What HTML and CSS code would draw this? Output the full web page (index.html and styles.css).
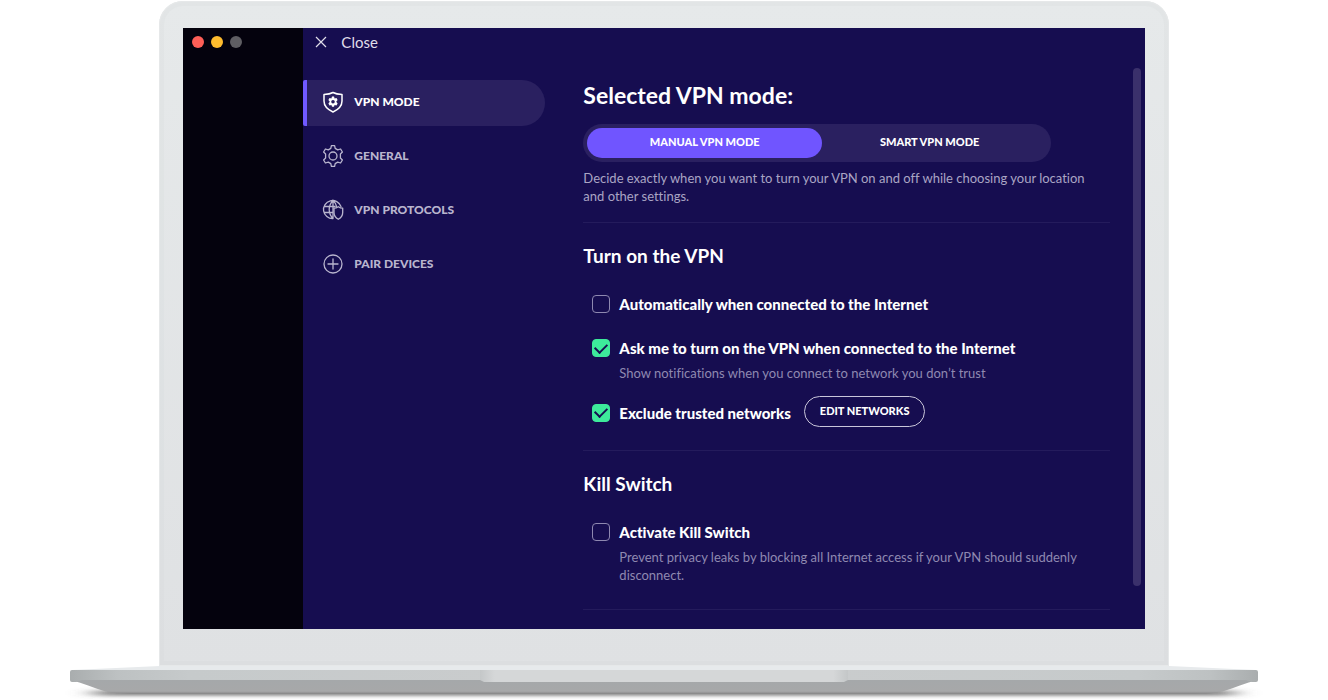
FILE: index.html
```html
<!DOCTYPE html>
<html lang="en">
<head>
<meta charset="utf-8">
<meta name="viewport" content="width=device-width, initial-scale=1">
<title>VPN mode settings</title>
<link rel="stylesheet" href="styles.css">
</head>
<body>
<div class="laptop">
  <div class="lid">
    <div class="screen">
      <aside class="window-edge">
        <span class="dot dot-red"></span>
        <span class="dot dot-yellow"></span>
        <span class="dot dot-gray"></span>
      </aside>
      <div class="sidebar">
        <button class="close" type="button">
          <svg class="close-icon" viewBox="0 0 12 12" aria-hidden="true"><path d="M1 1l10 10M11 1L1 11"/></svg>
          Close
        </button>
        <nav class="nav">
          <a class="nav-item active" href="#mode">
            <svg class="icon" viewBox="0 0 22 22" aria-hidden="true">
              <path stroke-width="1.5" d="M11 1.500C8.500 3 5 3.400 2 3.400V10C2 15 5.500 18.500 11 21C16.500 18.500 20 15 20 10V3.400C17 3.400 13.500 3 11 1.500Z"/>
              <path fill="currentColor" fill-rule="evenodd" stroke="none" d="M10 5.600h2l.6 1.900 1.900-.5 1.100 1.900-1.400 1.800 1.400 1.800-1.100 1.900-1.900-.5-.6 1.900h-2l-.6-1.900-1.900.5-1.100-1.900L7.800 10.700 6.400 8.900l1.100-1.900 1.900.5ZM11 8.900a1.800 1.800 0 1 0 0 3.600 1.800 1.800 0 0 0 0-3.600Z"/>
            </svg>
            <span class="nav-text">VPN MODE</span>
          </a>
          <a class="nav-item" href="#general">
            <svg class="icon" viewBox="0 0 22 22" aria-hidden="true">
              <path d="M9.400.7h3.200l.6 2.700 2.500 1.500 2.900-.9 1.800 3-2 2v4l2 2-1.800 3-2.900-.9-2.500 1.500-.6 2.700H9.400l-.6-2.700-2.500-1.500-2.900.9-1.800-3 2-2V9l-2-2 1.800-3 2.900.9 2.500-1.500Z"/>
              <circle cx="11" cy="11" r="4"/>
            </svg>
            <span class="nav-text">GENERAL</span>
          </a>
          <a class="nav-item" href="#protocols">
            <svg class="icon" viewBox="0 0 22 22" aria-hidden="true">
              <path d="M11 19.500A9 9 0 1 1 19 7.500M2.800 7.500H13M2.300 13.500H11M11 1.500V19.500M11 1.500C8.500 4 7.200 7 7.200 10.500S8.500 17 11 19.500M11 1.500C12.800 3.200 14 5.200 14.500 7.300"/>
              <path d="M16.300 7.700C14.900 8.700 13.400 9.100 12 9.100V13.500C12 17 14 19 16.300 20.300C18.600 19 20.700 17 20.700 13.500V9.100C19.200 9.100 17.700 8.700 16.300 7.700Z"/>
            </svg>
            <span class="nav-text">VPN PROTOCOLS</span>
          </a>
          <a class="nav-item" href="#pair">
            <svg class="icon" viewBox="0 0 22 22" aria-hidden="true"><circle cx="11" cy="11" r="9"/><path d="M11 6v10M6 11h10"/></svg>
            <span class="nav-text">PAIR DEVICES</span>
          </a>
        </nav>
      </div>
      <main class="content">
        <section class="section section-mode" id="mode">
          <h1 class="title">Selected VPN mode:</h1>
          <div class="switch">
            <button class="mode selected" type="button" aria-pressed="true">MANUAL VPN MODE</button>
            <button class="mode" type="button" aria-pressed="false">SMART VPN MODE</button>
          </div>
          <p class="note">Decide exactly when you want to turn your VPN on and off while choosing your location and other settings.</p>
        </section>
        <section class="section">
          <h2 class="subtitle">Turn on the VPN</h2>
          <div class="option">
            <input class="check" type="checkbox" id="auto">
            <label class="option-label" for="auto">Automatically when connected to the Internet</label>
          </div>
          <div class="option">
            <input class="check" type="checkbox" id="ask" checked>
            <label class="option-label" for="ask">Ask me to turn on the VPN when connected to the Internet</label>
          </div>
          <p class="hint">Show notifications when you connect to network you don’t trust</p>
          <div class="option option-tall">
            <input class="check" type="checkbox" id="trusted" checked>
            <label class="option-label" for="trusted">Exclude trusted networks</label>
            <button class="edit" type="button">EDIT NETWORKS</button>
          </div>
        </section>
        <section class="section">
          <h2 class="subtitle">Kill Switch</h2>
          <div class="option">
            <input class="check" type="checkbox" id="kill">
            <label class="option-label" for="kill">Activate Kill Switch</label>
          </div>
          <p class="hint">Prevent privacy leaks by blocking all Internet access if your VPN should suddenly disconnect.</p>
        </section>
      </main>
      <div class="scroll-track"><div class="scroll-thumb"></div></div>
    </div>
  </div>
  <svg class="base" viewBox="0 0 1328 34" aria-hidden="true">
    <defs>
      <linearGradient id="face" x1="0" x2="1" y1="0" y2="0">
        <stop offset="0" stop-color="#a9adae"/><stop offset=".04" stop-color="#bdc1c2"/><stop offset=".1" stop-color="#c6cacb"/>
        <stop offset=".5" stop-color="#cbcdce"/><stop offset=".9" stop-color="#c6cacb"/><stop offset=".96" stop-color="#bdc1c2"/><stop offset="1" stop-color="#a9adae"/>
      </linearGradient>
      <linearGradient id="under" x1="0" x2="0" y1="0" y2="1">
        <stop offset="0" stop-color="#a5a8aa"/><stop offset=".8" stop-color="#a7a8a9"/><stop offset="1" stop-color="#858585"/>
      </linearGradient>
      <linearGradient id="notch" x1="0" x2="1" y1="0" y2="0">
        <stop offset="0" stop-color="#c4c7c8"/><stop offset=".04" stop-color="#d5d7d8"/><stop offset=".96" stop-color="#d5d7d8"/><stop offset="1" stop-color="#c4c7c8"/>
      </linearGradient>
      <filter id="soft" x="-5%" y="-200%" width="110%" height="500%"><feGaussianBlur stdDeviation="12 2"/></filter>
    </defs>
    <rect x="94" y="25" width="1140" height="4" fill="#555" filter="url(#soft)"/>
    <path d="M160 0H1169L1256 4H72Z" fill="#e7eaec"/>
    <path d="M70 14H1258C1245 17 1234 22 1224 25C1214 28 1200 28 1184 28H144C128 28 114 28 104 25C94 22 83 17 70 14Z" fill="url(#under)"/>
    <path d="M72 4H1256Q1258 4 1258 6V14Q1258 16 1256 16H1252L1246 14H82L76 16H72Q70 16 70 14V6Q70 4 72 4Z" fill="url(#face)"/>
    <path d="M480 4H848V14L844 16H484L480 14Z" fill="url(#notch)"/>
  </svg>
</div>
</body>
</html>
```
FILE: styles.css
```css
* { box-sizing: border-box; }

body {
  margin: 0;
  background: #fff;
  color: #fff;
  font-family: Lato, "Open Sans", sans-serif;
  font-variant-ligatures: none;
}

.laptop {
  display: flex;
  flex-direction: column;
  align-items: center;
  padding-top: 1px;
  overflow: hidden;
}

.lid {
  width: 76%;
  padding: 27px 24px 37px 24px;
  border-radius: 24px 24px 0 0;
  background: linear-gradient(#e6e9ea, #dfe1e3);
  box-shadow: inset 0 0 0 1px #e6e8e9, inset 0 0 0 5px rgba(205, 209, 211, 0.16);
}

.screen {
  display: flex;
  min-height: 601px;
  background: #160d50;
}

.window-edge {
  display: flex;
  flex: 0 0 120px;
  gap: 7px;
  padding: 8px 9px;
  background: #04020d;
}

.dot { width: 12px; height: 12px; border-radius: 50%; }
.dot-red { background: #fe5f57; }
.dot-yellow { background: #febc2e; }
.dot-gray { background: #5f5e63; }

.sidebar { flex: 0 0 242px; }

.close {
  display: flex;
  align-items: center;
  gap: 14px;
  height: 28px;
  padding: 0 12px;
  border: 0;
  background: none;
  color: #e0deea;
  font: 15px/28px Lato, "Open Sans", sans-serif;
}

.close-icon { width: 12px; height: 12px; stroke: currentColor; stroke-width: 1.2; fill: none; }

.nav {
  display: flex;
  flex-direction: column;
  gap: 8px;
  margin-top: 24px;
}

.nav-item {
  display: flex;
  align-items: center;
  gap: 10px;
  height: 46px;
  padding: 0 0 2px 15px;
  border-left: 4px solid transparent;
  color: #b9b5ce;
  font-size: 12px;
  font-weight: 900;
  text-decoration: none;
}

.nav-text { padding-bottom: 2px; }

.active {
  border-left-color: #7059ff;
  border-radius: 2px 23px 23px 2px;
  background: #2a2060;
  color: #fff;
}

.icon {
  width: 22px;
  height: 22px;
  fill: none;
  stroke: currentColor;
  stroke-width: 1.3;
  stroke-linejoin: round;
  stroke-linecap: round;
}

.content { flex: 1; margin-left: 38px; padding-top: 51px; }

.section { border-bottom: 1px solid #241b5c; padding-bottom: 21px; }
.section-mode { padding-bottom: 17px; }

.title { margin: 0 0 13px; font-size: 23px; line-height: 32px; }

.switch {
  display: flex;
  width: 468px;
  max-width: 100%;
  height: 38px;
  padding: 4px;
  border-radius: 19px;
  background: #2a2060;
}

.mode {
  flex: 1;
  padding: 0 10px 2px 0;
  border: 0;
  border-radius: 15px;
  background: none;
  color: #fff;
  font: 900 11px/28px Lato, "Open Sans", sans-serif;
}

.selected { flex: 0 0 51%; padding: 0 0 2px; background: #7055ff; }

.note {
  margin: 7px 0 0;
  padding-right: 12px;
  color: #aaa5c4;
  font-size: 13px;
  line-height: 18px;
}

.subtitle { margin: 19px 0 22px; font-size: 19px; line-height: 28px; }

.option {
  display: flex;
  align-items: center;
  gap: 9px;
  min-height: 24px;
  margin-left: 9px;
}

.option + .option { margin-top: 20px; }

.option-label { font-size: 15px; font-weight: 900; line-height: 24px; }

.check {
  appearance: none;
  display: grid;
  place-items: center;
  width: 18px;
  height: 18px;
  margin: 0;
  border: 1px solid #8e88b0;
  border-radius: 4px;
}

.check:checked { border-color: #3dea9b; background: #3dea9b; }

.check:checked::before {
  content: "";
  width: 10px;
  height: 6px;
  margin-bottom: 3px;
  border-bottom: 2px solid #160d50;
  border-left: 2px solid #160d50;
  transform: rotate(-45deg);
}

.hint {
  margin: 4px 0 4px 36px;
  color: #8f89b0;
  font-size: 13px;
  line-height: 18px;
}

.option-tall { margin-top: 14px; }

.edit {
  height: 31px;
  margin: 0 0 2px 4px;
  padding: 0 15px 2px;
  border: 1px solid #c9c6da;
  border-radius: 16px;
  background: none;
  color: #fff;
  font: 900 11px/28px Lato, "Open Sans", sans-serif;
}

.scroll-track { flex: 0 0 35px; padding: 40px 4px 43px 23px; display: flex; }
.scroll-thumb { flex: 1; border-radius: 4px; background: #3a306b; }

.base { display: block; width: 100%; }
```
